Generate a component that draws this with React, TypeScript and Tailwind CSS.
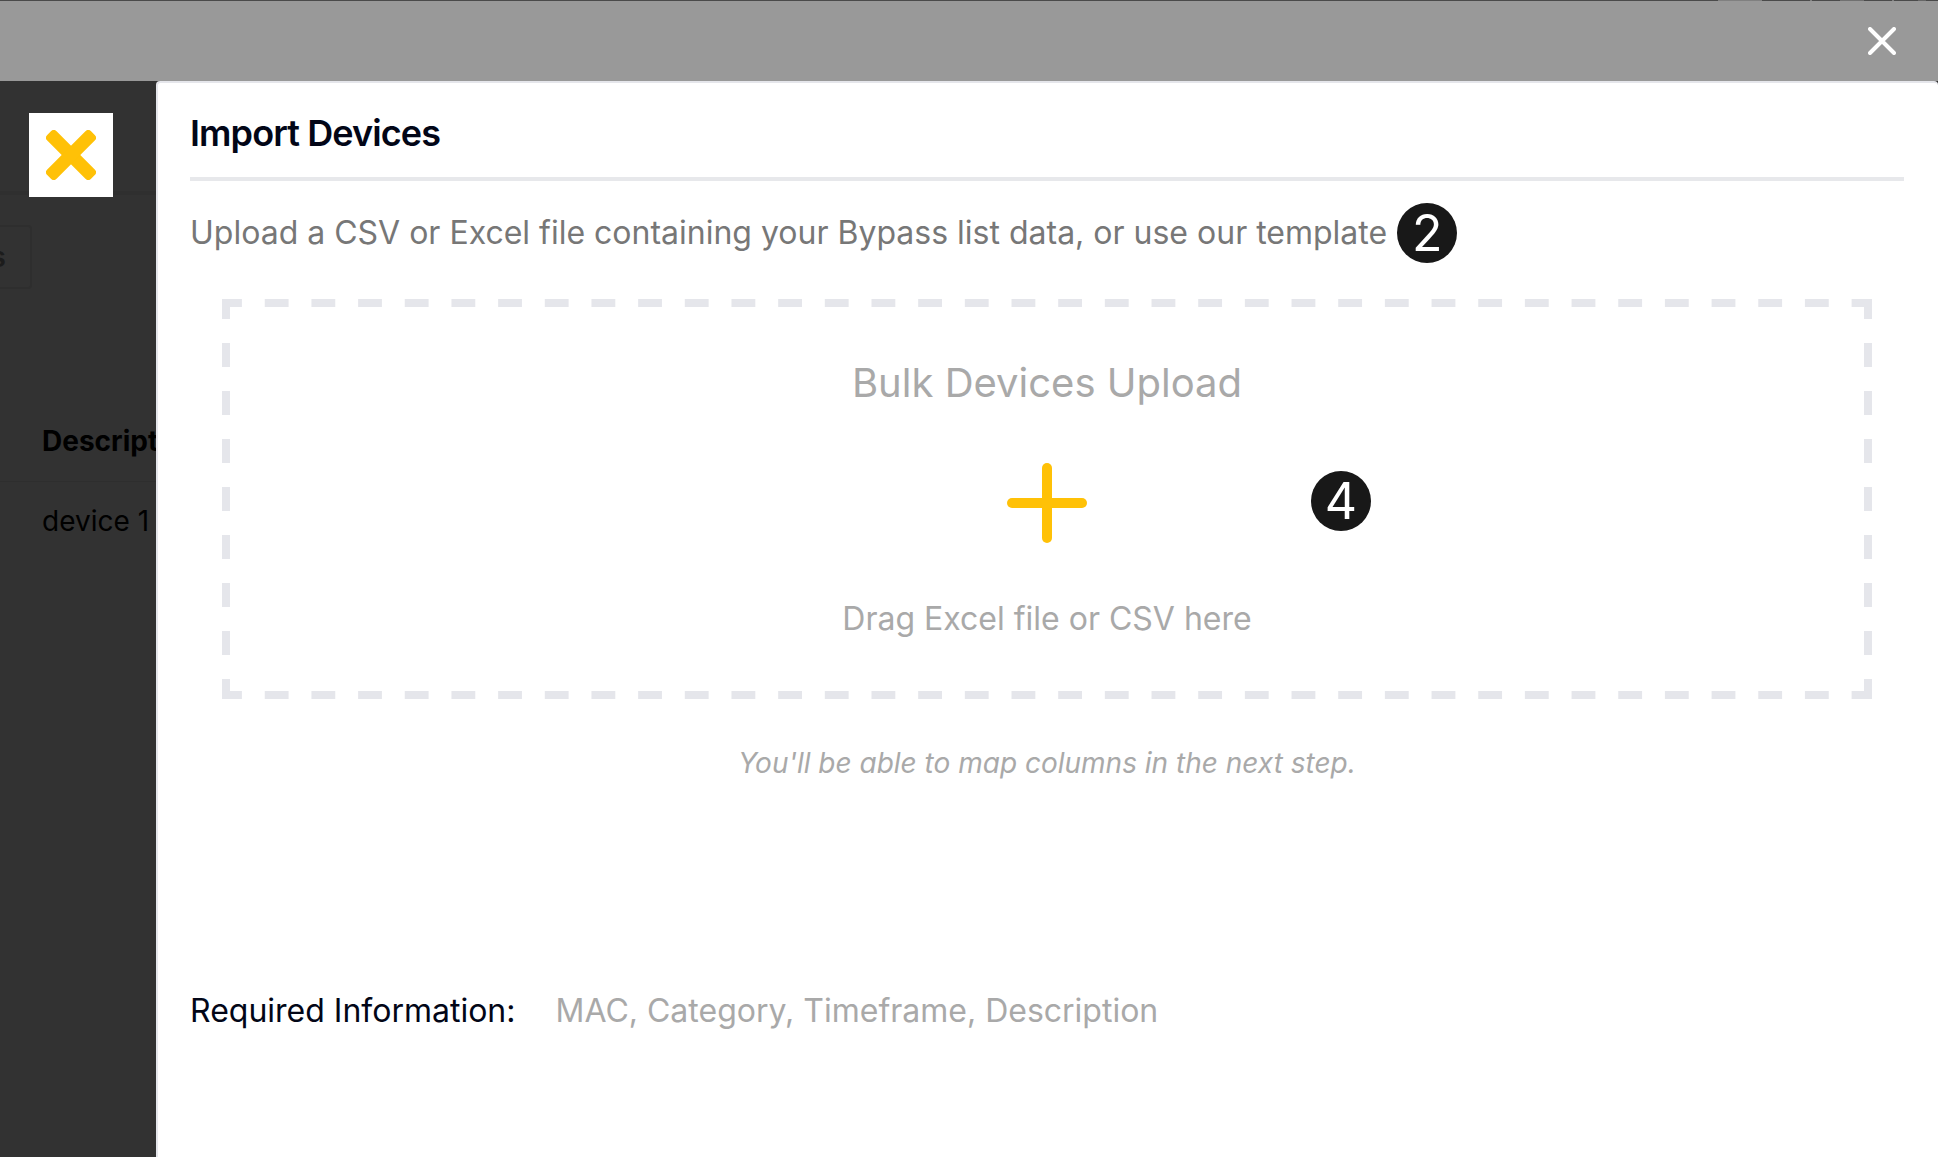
interface StepBadgeProps {
  step: number;
  className?: string;
}

const requiredFields = ['MAC', 'Category', 'Timeframe', 'Description'];

function StepBadge({ step, className = '' }: StepBadgeProps) {
  return (
    <span className={`flex size-15 shrink-0 items-center justify-center rounded-full bg-[#181818] text-[50px] leading-15 text-white ${className}`}>
      {step}
    </span>
  );
}

/* Long dashes on every side, with solid corners */
function DashedOutline() {
  return (
    <span aria-hidden="true">
      <span className="absolute inset-x-2 top-0 h-2 bg-[linear-gradient(90deg,#e5e6eb_12px,transparent_12px,transparent_calc(100%-12px),#e5e6eb_calc(100%-12px))] bg-[length:47px_8px] bg-repeat-round" />
      <span className="absolute inset-x-2 bottom-0 h-2 bg-[linear-gradient(90deg,#e5e6eb_12px,transparent_12px,transparent_calc(100%-12px),#e5e6eb_calc(100%-12px))] bg-[length:47px_8px] bg-repeat-round" />
      <span className="absolute inset-y-2 left-0 w-2 bg-[linear-gradient(#e5e6eb_12px,transparent_12px,transparent_calc(100%-12px),#e5e6eb_calc(100%-12px))] bg-[length:8px_48px] bg-repeat-round" />
      <span className="absolute inset-y-2 right-0 w-2 bg-[linear-gradient(#e5e6eb_12px,transparent_12px,transparent_calc(100%-12px),#e5e6eb_calc(100%-12px))] bg-[length:8px_48px] bg-repeat-round" />
      <span className="absolute top-0 left-0 size-2 bg-[#e5e6eb]" />
      <span className="absolute top-0 right-0 size-2 bg-[#e5e6eb]" />
      <span className="absolute bottom-0 left-0 size-2 bg-[#e5e6eb]" />
      <span className="absolute right-0 bottom-0 size-2 bg-[#e5e6eb]" />
    </span>
  );
}

function DropZone() {
  return (
    <label className="relative mx-8 mt-9 flex cursor-pointer flex-col items-center px-8 pt-15 pb-14 text-[#a9a9a9]">
      <DashedOutline />
      <input type="file" accept=".csv,.xls,.xlsx" className="sr-only" />
      <span className="text-[40px] leading-12">Bulk Devices Upload</span>
      <svg className="mt-14 size-20" viewBox="0 0 80 80" fill="#ffc107" aria-hidden="true">
        <rect x="35" y="0" width="10" height="80" rx="5" />
        <rect x="0" y="35" width="80" height="10" rx="5" />
      </svg>
      <span className="mt-13 text-[32px] leading-12">Drag Excel file or CSV here</span>
      <StepBadge step={4} className="absolute top-43 left-[66%]" />
    </label>
  );
}

function ImportDialog() {
  return (
    <section role="dialog" aria-labelledby="import-title" className="min-w-0 flex-1 rounded-t border-t-2 border-l-2 border-[#e5e6eb] bg-white pt-[26px] pr-[34px] pl-8">
      <h1 id="import-title" className="border-b-4 border-[#e7e8eb] pb-5 text-4xl leading-12 font-semibold tracking-tight text-[#020617]">
        Import Devices
      </h1>
      <div className="mt-[22px] flex items-center gap-2.5 text-[32px] leading-12 text-[#777777]">
        <p>Upload a CSV or Excel file containing your Bypass list data, or use our template</p>
        <StepBadge step={2} />
      </div>
      <DropZone />
      <p className="mt-10 text-center text-[28px] leading-12 text-[#a9a9a9] italic">
        You'll be able to map columns in the next step.
      </p>
      <dl className="mt-50 flex gap-10 text-[32px] leading-12">
        <dt className="text-[#020617]">Required Information:</dt>
        <dd className="text-[#a9a9a9]">{requiredFields.join(', ')}</dd>
      </dl>
    </section>
  );
}

function Backdrop() {
  return (
    <aside className="w-39 shrink-0 overflow-hidden text-[28px] whitespace-nowrap text-black">
      <div className="h-[114px] border-b-4 border-[#2f2f2f] pt-8 pl-[29px]">
        <button type="button" aria-label="Close panel" className="relative flex size-21 items-center justify-center bg-white">
          <svg className="size-[50px]" viewBox="-25 -25 50 50" fill="#ffc107" aria-hidden="true">
            <rect x="-31" y="-6.6" width="62" height="13.2" rx="4" transform="rotate(45)" />
            <rect x="-31" y="-6.6" width="62" height="13.2" rx="4" transform="rotate(-45)" />
          </svg>
        </button>
      </div>
      <div className="flex pt-[30px]">
        <button type="button" className="h-16 w-8 overflow-hidden rounded-r border-2 border-l-0 border-[#2e2e2e] pr-6 font-semibold text-[#1c1c1c]">
          <span className="float-right">s</span>
        </button>
      </div>
      <table className="mt-26 w-full text-left">
        <thead>
          <tr className="h-22 border-b border-[#2e2e2e]">
            <th className="pt-2 pl-[42px] font-bold">Description</th>
          </tr>
        </thead>
        <tbody>
          <tr className="h-20">
            <td className="pl-[42px]">device 1</td>
          </tr>
        </tbody>
      </table>
    </aside>
  );
}

/* Bottom edge of the bar above, showing through at the very top */
function TopEdge() {
  return (
    <div className="flex h-px shrink-0 justify-end bg-[#4a4a4a]" aria-hidden="true">
      <span className="mr-12 w-11 bg-[#808080]" />
      <span className="mr-7 w-0.5 bg-[#808080]" />
      <span className="mr-7 w-6 bg-[#707070]" />
      <span className="mr-6 w-0.5 bg-[#808080]" />
      <span className="mr-3 w-2 bg-[#666666]" />
    </div>
  );
}

export default function App() {
  return (
    <div className="flex min-h-screen flex-col bg-[#323232] font-[Inter,sans-serif]">
      <TopEdge />
      <header className="flex h-20 shrink-0 items-center justify-end bg-[#999999] pr-[42px]">
        <button type="button" aria-label="Close">
          <svg className="size-7" viewBox="0 0 28 28" fill="none" stroke="#ffffff" strokeWidth="4" strokeLinecap="round" aria-hidden="true">
            <path d="M2 2 26 26M26 2 2 26" />
          </svg>
        </button>
      </header>
      <div className="flex flex-1">
        <Backdrop />
        <ImportDialog />
      </div>
    </div>
  );
}
